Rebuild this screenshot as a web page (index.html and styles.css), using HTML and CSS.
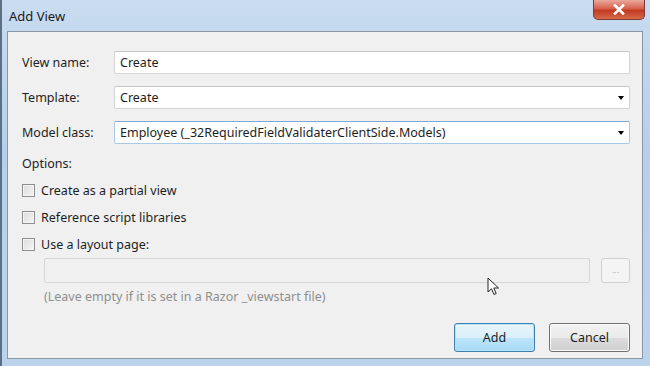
FILE: index.html
```html
<!DOCTYPE html>
<html lang="en">

<head>
    <meta charset="UTF-8">
    <title>Add View</title>
    <link rel="stylesheet" href="styles.css">
</head>

<body>
    <div class="window">
        <div class="titlebar">
            <span class="title">Add View</span>
            <button class="close">
                <svg width="14" height="11" viewBox="0 0 14 11">
                    <path d="M3 1.5 L11 9.5 M11 1.5 L3 9.5" stroke="#fff" stroke-width="2.6" stroke-linecap="square" />
                </svg>
            </button>
        </div>

        <div class="client">
            <div class="fields">
                <label class="lbl" for="viewName">View name:</label>
                <div class="box">Create</div>

                <label class="lbl">Template:</label>
                <div class="box combo">Create<span class="arrow"></span></div>

                <label class="lbl">Model class:</label>
                <div class="box combo focus">Employee (_32RequiredFieldValidaterClientSide.Models)<span class="arrow"></span></div>
            </div>

            <div class="options">Options:</div>

            <div class="check"><span class="tick"></span>Create as a partial view</div>
            <div class="check"><span class="tick"></span>Reference script libraries</div>
            <div class="check"><span class="tick"></span>Use a layout page:</div>

            <div class="layout-row">
                <div class="box disabled"></div>
                <div class="browse">...</div>
            </div>
            <div class="hint">(Leave empty if it is set in a Razor _viewstart file)</div>

            <div class="buttons">
                <button class="btn default">Add</button>
                <button class="btn">Cancel</button>
            </div>

            <!-- mouse pointer sitting over the dialog -->
            <svg class="pointer" width="14" height="20" viewBox="0 0 14 20">
                <path d="M1 1 L1 15 L4.5 11.8 L7 17.5 L9.2 16.5 L6.8 11 L11.5 11 Z" fill="#fff" stroke="#222" stroke-width="1" stroke-linejoin="round" />
            </svg>
        </div>
    </div>
</body>

</html>
```

FILE: styles.css
```css
body {
    margin: 0;
    font-family: "Noto Sans", "Open Sans", sans-serif;
    font-size: 12.5px;
    color: #1e1e1e;
}

.window {
    width: 650px;
    height: 366px;
    box-sizing: border-box;
    padding: 0 0 7px 0;
    background: linear-gradient(to bottom, #c9dcf0, #b7cfea 40%, #bcd3ec);
    border-left: 2px solid #5b6f86;
    display: flex;
    flex-direction: column;
    overflow: hidden;
}

.titlebar {
    height: 31px;
    display: flex;
    align-items: flex-start;
    justify-content: space-between;
    flex-shrink: 0;
}

.title {
    font-size: 13px;
    color: #1a1a1a;
    margin: 7px 0 0 7px;
}

.close {
    width: 52px;
    height: 20px;
    margin-right: 5px;
    border: 1px solid #7b3a33;
    border-top: none;
    border-radius: 0 0 5px 5px;
    background: linear-gradient(to bottom, #e9a99c, #d7614e 45%, #c23a22 55%, #d56a48);
    display: flex;
    align-items: center;
    justify-content: center;
    padding: 0;
}

.client {
    position: relative;
    margin: 0 7px 0 5px;
    flex: 1;
    background: #f0f0f0;
    border: 1px solid #8896a6;
    padding: 19px 12px 0 14px;
}

.fields {
    display: grid;
    grid-template-columns: 92px 1fr;
    grid-auto-rows: 23px;
    row-gap: 12px;
    align-items: center;
}

.lbl {
    white-space: nowrap;
}

.box {
    height: 23px;
    box-sizing: border-box;
    border: 1px solid #d4d4d4;
    border-top-color: #c6c6c6;
    background: #fff;
    padding: 0 5px;
    display: flex;
    align-items: center;
    position: relative;
    border-radius: 2px;
}

.combo .arrow {
    position: absolute;
    right: 5px;
    top: 9px;
    border-left: 3.5px solid transparent;
    border-right: 3.5px solid transparent;
    border-top: 4px solid #000;
}

.focus {
    border-color: #a9c9e8;
    border-top-color: #7fa9d6;
}

.options {
    margin-top: 11px;
    height: 17px;
}

.check {
    display: flex;
    align-items: center;
    height: 17px;
    margin-top: 10px;
}

.check:first-of-type {
    margin-top: 9px;
}

.tick {
    width: 11px;
    height: 11px;
    border: 1px solid #8e8f8f;
    background: linear-gradient(135deg, #dcdcdc, #f5f5f5);
    box-shadow: inset 0 0 0 1px #f4f4f4;
    margin-right: 6px;
}

.layout-row {
    display: flex;
    gap: 11px;
    margin: 5px 0 0 22px;
}

.layout-row .disabled {
    flex: 1;
    height: 25px;
    background: #f0f0f0;
    border-color: #d6d6d6;
}

.browse {
    width: 29px;
    height: 25px;
    box-sizing: border-box;
    border: 1px solid #d0d0d0;
    border-radius: 3px;
    background: #f4f4f4;
    color: #b0b0b0;
    font-size: 9px;
    display: flex;
    align-items: center;
    justify-content: center;
    padding-bottom: 2px;
}

.hint {
    margin: 5px 0 0 22px;
    color: #8f8f8f;
}

.buttons {
    display: flex;
    justify-content: flex-end;
    gap: 14px;
    margin-top: 18px;
}

.btn {
    width: 81px;
    height: 29px;
    font-family: inherit;
    font-size: 12.5px;
    color: #1e1e1e;
    border: 1px solid #707070;
    border-radius: 3px;
    background: linear-gradient(to bottom, #f2f2f2, #ebebeb 50%, #dddddd 51%, #cfcfcf);
    box-shadow: inset 0 0 0 1px #fbfbfb;
}

.btn.default {
    border-color: #3c7fb1;
    background: linear-gradient(to bottom, #e9f5fc, #d9effa 50%, #bee6fd 51%, #a7d9f5);
    box-shadow: inset 0 0 0 1px #b9e2f8;
}

.pointer {
    position: absolute;
    left: 479px;
    top: 245px;
}
```
